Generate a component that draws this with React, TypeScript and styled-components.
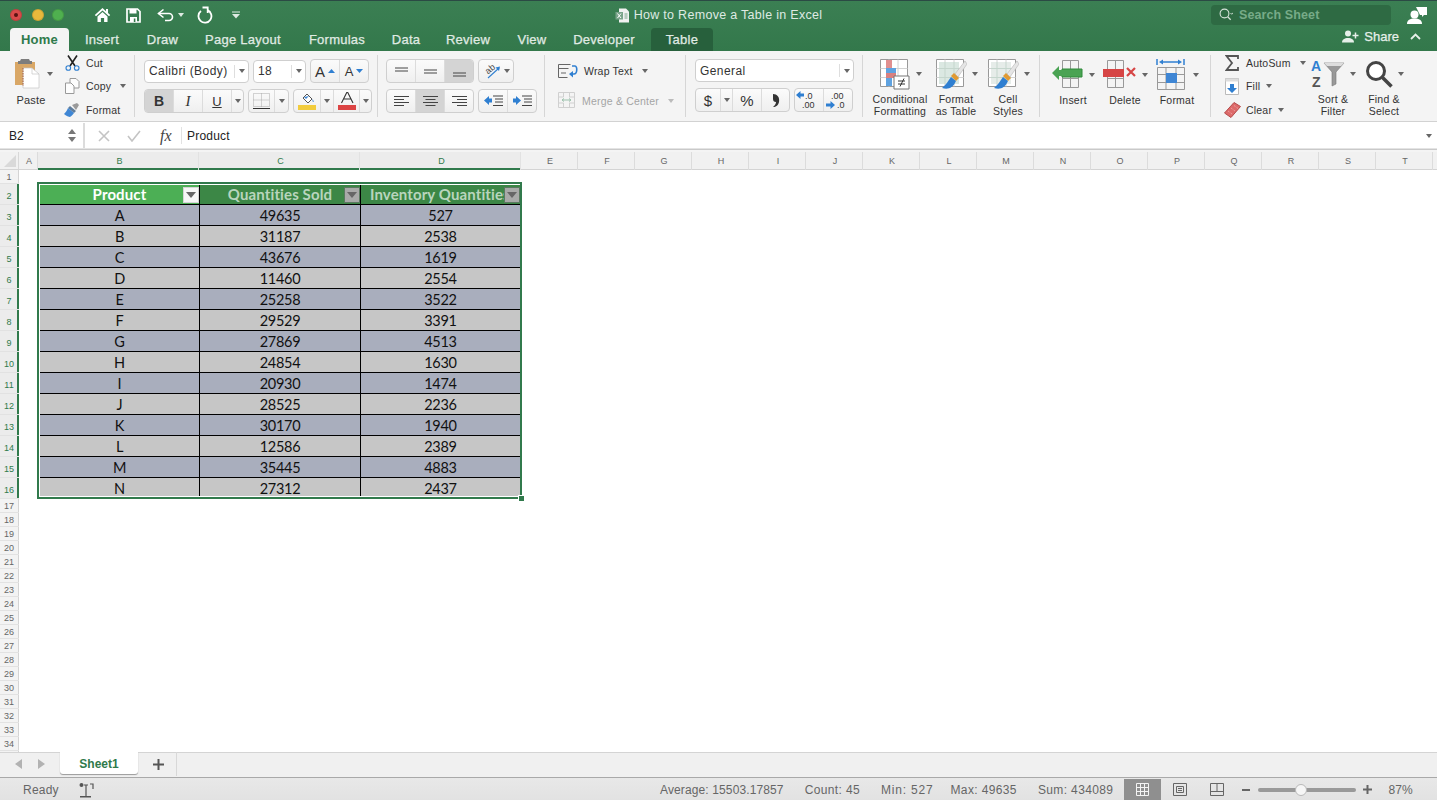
import styled, { createGlobalStyle } from "styled-components";
import { ReactNode } from "react";

const UI_FONT = `"Liberation Sans", Arial, sans-serif`;
const GREEN = "#317a4c";

const GlobalStyle = createGlobalStyle`
  html, body { margin: 0; padding: 0; background: #fff; overflow: hidden; }
  body { font-family: ${UI_FONT}; }
  * { box-sizing: border-box; }
  svg { display: block; flex: none; }
`;

const Page = styled.div`
  width: 1437px;
  height: 800px;
  display: flex;
  flex-direction: column;
  overflow: hidden;
`;

/* ---------- title bar ---------- */
const TopBar = styled.header`
  height: 51px;
  flex: none;
  background: linear-gradient(#3b7f53, #33784b);
  border-top: 1px solid #2b4a44;
  display: flex;
  flex-direction: column;
`;
const TitleRow = styled.div`
  height: 27px;
  padding-top: 1px;
  display: grid;
  grid-template-columns: 1fr auto 1fr;
  align-items: center;
`;
const QuickBar = styled.div`
  display: flex;
  align-items: center;
`;
const Light = styled.span<{ $c: string; $gap: number }>`
  width: 12px;
  height: 12px;
  border-radius: 50%;
  background: ${(p) => p.$c};
  margin-left: ${(p) => p.$gap}px;
  display: flex;
  align-items: center;
  justify-content: center;
  box-shadow: inset 0 0 0 1px rgba(0, 0, 0, 0.12);
  &::after {
    content: "";
    width: 4px;
    height: 4px;
    border-radius: 50%;
    background: ${(p) => (p.$c === "#d94a4a" ? "#5a1212" : "transparent")};
  }
`;
const QuickIcon = styled.span<{ $gap: number }>`
  margin-left: ${(p) => p.$gap}px;
  display: flex;
  align-items: center;
`;
const Title = styled.div`
  display: flex;
  align-items: center;
  gap: 4px;
  color: #dfeae3;
  font-size: 12.5px;
  letter-spacing: 0.3px;
`;
const TitleRight = styled.div`
  display: flex;
  align-items: center;
  justify-content: flex-end;
  padding-right: 10px;
`;
const SearchBox = styled.div`
  width: 180px;
  height: 20px;
  background: #2e6a43;
  border-radius: 4px;
  display: flex;
  align-items: center;
  padding-left: 8px;
  gap: 6px;
  color: #77ab88;
  font-size: 12.5px;
  font-weight: 700;
  letter-spacing: 0.1px;
`;
const TabRow = styled.nav`
  height: 23px;
  display: flex;
  align-items: flex-end;
  padding-left: 10px;
`;
const Tab = styled.div<{ $w: number; $on?: boolean; $dark?: boolean }>`
  width: ${(p) => p.$w}px;
  height: 23px;
  margin-left: ${(p) => (p.$dark ? 5 : 0)}px;
  padding-bottom: 1px;
  display: flex;
  align-items: center;
  justify-content: center;
  border-radius: 4px 4px 0 0;
  font-size: 13px;
  font-weight: ${(p) => (p.$on ? 700 : 400)};
  letter-spacing: 0.25px;
  -webkit-text-stroke: ${(p) => (p.$on ? "0" : "0.25px")};
  color: ${(p) => (p.$on ? "#2f7a4b" : "#e0ebe4")};
  background: ${(p) => (p.$on ? "#f4f4f4" : p.$dark ? "#27603c" : "transparent")};
`;
const ShareBox = styled.div`
  margin-left: auto;
  height: 23px;
  display: flex;
  align-items: center;
  color: #e6efe9;
  font-size: 13px;
  -webkit-text-stroke: 0.25px;
  gap: 5px;
  padding-right: 16px;
  position: relative;
  top: -3px;
`;

/* ---------- ribbon ---------- */
const Ribbon = styled.div`
  height: 71px;
  flex: none;
  background: #f4f4f4;
  border-bottom: 1px solid #d2d2d2;
  display: flex;
  padding: 4px 0;
  color: #333;
`;
const Group = styled.section<{ $w: number; $pad?: number; $last?: boolean }>`
  width: ${(p) => p.$w}px;
  padding-left: ${(p) => p.$pad ?? 8}px;
  border-right: ${(p) => (p.$last ? "none" : "1px solid #d6d6d6")};
  display: flex;
  align-items: stretch;
  flex: none;
`;
const Lines = styled.div<{ $gap?: number; $top?: number }>`
  display: flex;
  flex-direction: column;
  gap: ${(p) => p.$gap ?? 6}px;
  padding-top: ${(p) => p.$top ?? 4}px;
`;
const Line = styled.div`
  display: flex;
  gap: 4px;
  align-items: center;
`;
const PasteBlock = styled.div`
  width: 62px;
  margin-left: -8px;
  display: flex;
  flex-direction: column;
  align-items: center;
  font-size: 11px;
  letter-spacing: 0.2px;
  gap: 5px;
  padding: 3px 0 0 0;
`;
const PasteTop = styled.div`
  display: flex;
  align-items: center;
  gap: 7px;
  margin-left: 6px;
`;
const SmallStack = styled.div<{ $w?: number; $left?: number }>`
  width: ${(p) => p.$w ?? 70}px;
  margin: -3px 0 -3px ${(p) => p.$left ?? 0}px;
  display: flex;
  flex-direction: column;
  justify-content: space-between;
`;
const SmallRow = styled.div<{ $off?: boolean }>`
  height: 21px;
  display: flex;
  align-items: center;
  gap: 6px;
  font-size: 10.5px;
  letter-spacing: 0.2px;
  color: ${(p) => (p.$off ? "#a5a5a5" : "#333")};
`;
const SmallIcon = styled.span`
  width: 16px;
  display: flex;
  justify-content: center;
`;
const Caret = styled.span<{ $off?: boolean; $gap?: number; $light?: boolean }>`
  width: 0;
  height: 0;
  flex: none;
  margin-left: ${(p) => p.$gap ?? 0}px;
  border-left: 3px solid transparent;
  border-right: 3px solid transparent;
  border-top: 4px solid ${(p) => (p.$light ? "#dfeae3" : p.$off ? "#bbb" : "#666")};
`;
const Select = styled.div<{ $w: number }>`
  width: ${(p) => p.$w}px;
  height: 23px;
  background: #fff;
  border: 1px solid #cfcfcf;
  border-radius: 4px;
  display: flex;
  align-items: center;
  padding-left: 4px;
  font-size: 12px;
  letter-spacing: 0.42px;
  color: #333;
`;
const SelectArrow = styled.span`
  margin-left: auto;
  width: 14px;
  height: 13px;
  border-left: 1px solid #dedede;
  display: flex;
  align-items: center;
  justify-content: center;
`;
const BtnGroup = styled.div`
  height: 24px;
  display: flex;
  border: 1px solid #cfcfcf;
  border-radius: 4px;
  background: linear-gradient(#fbfbfb, #efefef);
  overflow: hidden;
`;
const Seg = styled.div<{ $w: number; $on?: boolean }>`
  width: ${(p) => p.$w}px;
  display: flex;
  align-items: center;
  justify-content: center;
  gap: 3px;
  background: ${(p) => (p.$on ? "#d4d4d4" : "transparent")};
  border-right: 1px solid #dcdcdc;
  color: #333;
  font-size: 14px;
  &:last-child { border-right: 0; }
`;
const FontGlyph = styled.span<{ $b?: boolean; $i?: boolean; $u?: boolean; $size?: number }>`
  font-weight: ${(p) => (p.$b ? 700 : 400)};
  font-style: ${(p) => (p.$i ? "italic" : "normal")};
  text-decoration: ${(p) => (p.$u ? "underline" : "none")};
  font-size: ${(p) => p.$size ?? 13}px;
  font-family: ${(p) => (p.$i ? `"Liberation Serif", serif` : UI_FONT)};
`;
const BigRow = styled.div`
  display: flex;
  height: 100%;
`;
const BigBtn = styled.div<{ $w: number }>`
  width: ${(p) => p.$w}px;
  display: flex;
  flex-direction: column;
  align-items: center;
  font-size: 10.5px;
  line-height: 12px;
  letter-spacing: 0.22px;
  text-align: center;
  color: #333;
`;
const BigIcon = styled.div`
  height: 37px;
  display: flex;
  align-items: center;
  gap: 5px;
  margin-top: 1px;
  margin-bottom: 1px;
`;
const TightLabel = styled.div`
  white-space: pre-line;
  padding-top: 1px;
`;

/* ---------- formula bar ---------- */
const FormulaBar = styled.div`
  height: 27px;
  flex: none;
  background: #fff;
  display: flex;
  align-items: center;
  padding-top: 1px;
  font-size: 12px;
  color: #222;
  border-bottom: 1px solid #e4e4e4;
`;
const NameBox = styled.div`
  width: 85px;
  height: 100%;
  display: flex;
  align-items: center;
  justify-content: space-between;
  padding: 0 7px 0 9px;
  border-right: 2px solid #dcdcdc;
`;
const Spinner = styled.div`
  display: flex;
  flex-direction: column;
  gap: 3px;
`;
const Tri = styled.span<{ $up?: boolean }>`
  width: 0;
  height: 0;
  border-left: 4px solid transparent;
  border-right: 4px solid transparent;
  ${(p) => (p.$up ? "border-bottom: 5px solid #777;" : "border-top: 5px solid #777;")}
`;
const FormulaTools = styled.div`
  width: 97px;
  height: 17px;
  display: flex;
  align-items: center;
  padding-left: 13px;
  gap: 17px;
  border-right: 1px solid #e2e2e2;
`;
const FxLabel = styled.span`
  font-family: "Liberation Serif", serif;
  font-style: italic;
  font-size: 16px;
  color: #444;
  margin-left: 2px;
`;
const FormulaText = styled.div`
  padding-left: 5px;
  flex: 1;
  letter-spacing: 0.2px;
`;
const GrayBand = styled.div`
  height: 3px;
  flex: none;
  background: #f4f4f4;
  border-top: 1px solid #c9c9c9;
`;

/* ---------- sheet ---------- */
const ColHeader = styled.div`
  height: 18px;
  flex: none;
  display: flex;
  background: #f1f1f1;
  border-bottom: 1px solid #d4d4d4;
`;
const Corner = styled.div`
  width: 19px;
  display: flex;
  align-items: flex-end;
  justify-content: flex-end;
  padding: 0 2px 2px 0;
  border-right: 1px solid #d8d8d8;
`;
const ColCell = styled.div<{ $w: number; $on?: boolean }>`
  width: ${(p) => p.$w}px;
  flex: none;
  font-size: 9px;
  padding-left: ${(p) => (p.$on ? 3 : 2)}px;
  display: flex;
  align-items: center;
  justify-content: center;
  color: ${(p) => (p.$on ? "#2f7a4b" : "#666")};
  border-right: 1px solid ${(p) => (p.$on ? "#e2e2e2" : "#dcdcdc")};
  background: ${(p) => (p.$on ? "#ececec" : "transparent")};
  box-shadow: ${(p) => (p.$on ? `inset 0 -2px 0 ${GREEN}` : "none")};
  margin-bottom: -1px;
`;
const SheetArea = styled.div`
  flex: 1;
  min-height: 0;
  display: flex;
`;
const RowHeader = styled.div`
  width: 19px;
  flex: none;
  background: #f3f3f3;
  border-right: 1px solid #d4d4d4;
`;
const RowCell = styled.div<{ $h: number; $on?: boolean }>`
  height: ${(p) => p.$h}px;
  font-size: 9px;
  display: flex;
  align-items: center;
  justify-content: center;
  color: ${(p) => (p.$on ? "#2f7a4b" : "#666")};
  padding: ${(p) => (p.$on ? "3px" : "1px")} 1px 0 0;
  background: ${(p) => (p.$on ? "#ececec" : "transparent")};
  border-bottom: 1px solid #e2e2e2;
  box-shadow: ${(p) => (p.$on ? `inset -2px 0 0 ${GREEN}` : "none")};
  margin-right: -1px;
`;
const Canvas = styled.div`
  flex: 1;
  padding: 12px 0 0 18px;
`;
const TableFrame = styled.div`
  width: 485px;
  height: 317px;
  border: 2px solid ${GREEN};
  background: #fff;
  padding: 1px 0 1px 1px;
  position: relative;
  font-family: Lato, "Open Sans", sans-serif;
`;
const Handle = styled.span`
  position: absolute;
  right: -4px;
  bottom: -4px;
  width: 6px;
  height: 6px;
  background: ${GREEN};
  border-left: 1px solid #fff;
  border-top: 1px solid #fff;
`;
const TableGrid = styled.div`
  display: grid;
  grid-template-columns: 160px 161px 159px;
  grid-template-rows: 20px repeat(13, 21px) 18px;
`;
const HeadCell = styled.div<{ $dim?: boolean; $left?: boolean }>`
  position: relative;
  display: flex;
  align-items: center;
  justify-content: ${(p) => (p.$left ? "flex-start" : "center")};
  padding-left: ${(p) => (p.$left ? 9 : 0)}px;
  padding-bottom: 1px;
  overflow: hidden;
  white-space: nowrap;
  background: ${(p) => (p.$dim ? "#3c8746" : "#4caf55")};
  color: ${(p) => (p.$dim ? "#b9d5bd" : "#fff")};
  font-weight: 700;
  font-size: 15px;
  letter-spacing: 0.12px;
  border-bottom: 1px solid #000;
  border-right: ${(p) => (p.$left ? "0" : "1px solid #000")};
`;
const FilterBtn = styled.span<{ $dim?: boolean }>`
  position: absolute;
  right: 0;
  top: 2px;
  width: 16px;
  height: 16px;
  background: ${(p) => (p.$dim ? "#a9aaa9" : "#f6f6f6")};
  border: 1px solid ${(p) => (p.$dim ? "#5b7a60" : "#d5d5d5")};
  display: flex;
  align-items: center;
  justify-content: center;
  &::after {
    content: "";
    border-left: 5px solid transparent;
    border-right: 5px solid transparent;
    border-top: 6px solid #666;
  }
`;
const Cell = styled.div<{ $odd: boolean; $last?: boolean; $end?: boolean }>`
  display: flex;
  align-items: center;
  justify-content: center;
  font-size: 14.5px;
  letter-spacing: -0.28px;
  padding-top: ${(p) => (p.$end ? 3 : 0)}px;
  color: #111;
  background: ${(p) => (p.$odd ? "#a9aebd" : "#c6c6c6")};
  border-bottom: ${(p) => (p.$end ? "0" : "1px solid #000")};
  border-right: ${(p) => (p.$last ? "0" : "1px solid #000")};
  overflow: hidden;
`;

/* ---------- tabs and status ---------- */
const SheetTabs = styled.div`
  height: 26px;
  flex: none;
  display: flex;
  align-items: flex-start;
  background: #f0f0f0;
  border-top: 1px solid #d4d4d4;
  border-bottom: 1px solid #a9a9a9;
`;
const NavArrows = styled.div`
  width: 60px;
  height: 22px;
  display: flex;
  align-items: center;
  justify-content: center;
  gap: 16px;
  padding-right: 1px;
`;
const NavTri = styled.span<{ $right?: boolean }>`
  width: 0;
  height: 0;
  border-top: 5px solid transparent;
  border-bottom: 5px solid transparent;
  ${(p) => (p.$right ? "border-left: 7px solid #b2b2b2;" : "border-right: 7px solid #b2b2b2;")}
`;
const SheetTab = styled.div`
  width: 78px;
  height: 22px;
  padding-top: 2px;
  background: #fff;
  border-radius: 0 0 3px 3px;
  box-shadow: 0 1px 1px #999;
  display: flex;
  align-items: center;
  justify-content: center;
  color: #2f7a4b;
  font-weight: 700;
  font-size: 12px;
  margin-top: -1px;
`;
const AddSheet = styled.div`
  width: 39px;
  height: 24px;
  margin-top: -1px;
  padding-left: 2px;
  display: flex;
  align-items: center;
  justify-content: center;
  border-right: 1px solid #d8d8d8;
`;
const StatusBar = styled.footer`
  height: 22px;
  flex: none;
  display: flex;
  align-items: center;
  padding-top: 1px;
  background: linear-gradient(#e8e8e8, #e2e2e2);
  font-size: 12px;
  color: #666;
  letter-spacing: 0.37px;
`;
const Ready = styled.span`
  margin-left: 23px;
  margin-right: 20px;
  letter-spacing: 0.22px;
`;
const Stats = styled.div`
  margin-left: auto;
  display: flex;
  margin-right: 11px;
`;
const Stat = styled.span<{ $gap?: number; $ls?: number }>`
  margin-left: ${(p) => p.$gap ?? 21}px;
  letter-spacing: ${(p) => p.$ls ?? 0.37}px;
`;
const ViewBtn = styled.div<{ $on?: boolean }>`
  width: 37px;
  height: 21px;
  display: flex;
  align-items: center;
  justify-content: center;
  background: ${(p) => (p.$on ? "#8f8f8f" : "transparent")};
`;
const Zoomer = styled.div`
  display: flex;
  align-items: center;
  margin-left: 7px;
`;
const Track = styled.div`
  width: 98px;
  height: 4px;
  border-radius: 2px;
  background: #999;
  margin: 0 7px 0 8px;
  position: relative;
`;
const Knob = styled.span`
  position: absolute;
  left: 37px;
  top: -4px;
  width: 12px;
  height: 12px;
  border-radius: 50%;
  background: #f6f6f6;
  border: 1px solid #b9b9b9;
`;
const Percent = styled.span`
  margin-left: 16px;
  margin-right: 24px;
  letter-spacing: 0.2px;
`;

/* ---------- drawings ---------- */
const Svg = ({ w, h, children }: { w: number; h: number; children: ReactNode }) => (
  <svg width={w} height={h} viewBox={`0 0 ${w} ${h}`} fill="none">
    {children}
  </svg>
);

const HomeIcon = () => (
  <Svg w={17} h={16}>
    <path d="M8.5 1 .8 8l1.2 1.2L8.5 3.4 15 9.2 16.2 8l-2.2-2V2h-2v2.2z" fill="#fff" />
    <path d="M3.5 9.5 8.5 5l5 4.5V15h-3.4v-4H6.9v4H3.5z" fill="#fff" />
  </Svg>
);
const SaveIcon = () => (
  <Svg w={15} h={15}>
    <path d="M1 1h10.5L14 3.5V14H1z" stroke="#fff" strokeWidth="1.7" />
    <path d="M3.5 1h7v4.5h-7z" fill="#fff" />
    <path d="M4 9h7v5H4z" fill="#fff" />
    <path d="M7.8 10.5h1.6V14H7.8z" fill="#33784b" />
  </Svg>
);
const UndoIcon = () => (
  <Svg w={18} h={14}>
    <path d="M6.5 1.5 1.500 5.500l5 4" stroke="#fff" strokeWidth="1.6" />
    <path d="M1.500 5.500H12a3.500 3.500 0 0 1 0 7H8" stroke="#fff" strokeWidth="1.6" />
  </Svg>
);
const RedoIcon = () => (
  <Svg w={16} h={18}>
    <path d="M10.500 4.200A6.500 6.500 0 1 1 4 5" stroke="#fff" strokeWidth="1.800" />
    <path d="M5.500 1.500h5.200v5.600" stroke="#fff" strokeWidth="1.800" />
  </Svg>
);
const QuickMore = () => (
  <Svg w={8} h={8}>
    <path d="M0 1h8" stroke="#dfeae3" strokeWidth="1" />
    <path d="M0 3h8L4 7.5z" fill="#dfeae3" />
  </Svg>
);
const ExcelDoc = () => (
  <Svg w={15} h={15}>
    <path d="M4 .5h7L14 3.5V14.5H4z" fill="#f1f1f1" />
    <path d="M.5 4H8v7.5H.5z" fill="#7aa48a" />
    <path d="m2.5 5.5 3.5 4.5M6 5.5 2.5 10" stroke="#fff" />
    <path d="M9.5 6h3M9.5 8h3M9.5 10h3" stroke="#7aa48a" />
  </Svg>
);
const SearchIcon = ({ c = "#d5e2d9", w = 14 }: { c?: string; w?: number }) => (
  <Svg w={w} h={14}>
    <circle cx="5.5" cy="5.5" r="4.4" stroke={c} strokeWidth="1.1" />
    <path d="m8.7 8.7 3 3" stroke={c} strokeWidth="1.3" />
    <path d="m11.5 5 1.2 1.2L13.9 5" stroke={c} />
  </Svg>
);
const PersonChat = () => (
  <Svg w={20} h={19}>
    <path d="M9 1h11v8h-3l-2 2V9h-2z" fill="#fff" />
    <circle cx="7.5" cy="8.5" r="4" fill="#fff" />
    <path d="M0 18c0-4 3-5.5 7.5-5.5S15 14 15 18z" fill="#fff" />
  </Svg>
);
const PersonPlus = () => (
  <Svg w={17} h={13}>
    <circle cx="6" cy="3.5" r="3" fill="#e6efe9" />
    <path d="M0 12.5c0-3 2.5-4.5 6-4.5s6 1.500 6 4.500z" fill="#e6efe9" />
    <path d="M13.500 2.500v6M10.500 5.500h6" stroke="#e6efe9" strokeWidth="1.500" />
  </Svg>
);
const Chevron = () => (
  <Svg w={11} h={7}>
    <path d="m1 6 4.500-4.500L10 6" stroke="#e6efe9" strokeWidth="1.800" />
  </Svg>
);
const PasteIcon = () => (
  <Svg w={25} h={31}>
    <path d="M0 4h20v23H0z" fill="#d9a766" />
    <path d="M6 1h8l1 2h2v3H3V3h2z" fill="#7d7d7d" />
    <path d="M8 10h9l7 6v14H8z" fill="#fff" stroke="#c6c6c6" strokeWidth=".7" />
    <path d="M17 10v6h7" stroke="#c6c6c6" strokeWidth=".7" />
    <path d="M8 10v18" stroke="#a8562e" strokeWidth="1" strokeDasharray="1.500 1" />
  </Svg>
);
const CutIcon = () => (
  <Svg w={15} h={16}>
    <path d="M3 .5 10 11M12 .5 5 11" stroke="#222" strokeWidth="1.600" />
    <circle cx="3.300" cy="13" r="2.300" stroke="#2f7fd1" strokeWidth="1.100" />
    <circle cx="11.700" cy="13" r="2.300" stroke="#2f7fd1" strokeWidth="1.100" />
  </Svg>
);
const CopyIcon = () => (
  <Svg w={15} h={16}>
    <path d="M5 .5h6l3 3V10H5z" fill="#fdfdfd" stroke="#999" />
    <path d="M.5 5H6l3 3v7.500H.500z" fill="#fdfdfd" stroke="#999" />
  </Svg>
);
const BrushIcon = () => (
  <Svg w={16} h={14}>
    <path d="m8 2 5-2 2 2-3 5z" fill="#9a9a9a" />
    <path d="m6 3 6 5-2 2-6-5z" fill="#5f7c9a" />
    <path d="M4 5c-1 3-3 5-4 6 2 2 5 3 6 3 2-1 3-3 4-4z" fill="#3f86d4" />
  </Svg>
);
const GrowA = ({ up }: { up: boolean }) => (
  <>
    <FontGlyph $size={up ? 15 : 13}>A</FontGlyph>
    <svg width="7" height="4" viewBox="0 0 7 4">
      <path d={up ? "M0 4 3.500 0 7 4z" : "M0 0h7L3.500 4z"} fill="#2f7fd1" />
    </svg>
  </>
);
const BorderIcon = () => (
  <Svg w={17} h={17}>
    <path d="M.5.5h16v13H.5zM8.500.5v13M.5 7h16" stroke="#aaa" strokeDasharray="1 1" />
    <path d="M0 15.500h17" stroke="#333" strokeWidth="1" />
  </Svg>
);
const FillIcon = () => (
  <Svg w={18} h={18}>
    <path d="m9 2 5 5-4 4-5-5z" fill="#fff" stroke="#555" />
    <path d="M6 5 8 7l3-3z" fill="#3f86d4" />
    <path d="M14.500 7c1 1.500 1.500 2.500 1 3-.8.3-1.200-.8-1-3z" fill="#3f86d4" />
    <path d="M0 13h18v5H0z" fill="#f2cc3d" />
  </Svg>
);
const ColorA = () => (
  <Svg w={18} h={18}>
    <path d="M0 13h18v5H0z" fill="#dc4444" />
    <path d="M3.500 11 9 0h.5L15 11M6 7h7" stroke="#333" strokeWidth="1.100" />
  </Svg>
);
const VAlign = ({ y }: { y: number }) => (
  <Svg w={13} h={13}>
    <path d={`M0 ${y}h13M0 ${y + 3}h13`} stroke="#444" />
  </Svg>
);
const HAlign = ({ kind }: { kind: "l" | "c" | "r" }) => {
  const s = (long: boolean, y: number) => {
    const w = long ? 15 : 10;
    const x = kind === "l" ? 0 : kind === "r" ? 15 - w : (15 - w) / 2;
    return `M${x} ${y}h${w}`;
  };
  return (
    <Svg w={15} h={12}>
      <path d={[s(true, 1.5), s(false, 4.5), s(true, 7.5), s(false, 10.5)].join("")} stroke="#444" />
    </Svg>
  );
};
const OrientIcon = () => (
  <svg width="18" height="18" viewBox="0 0 18 18" fill="none" overflow="visible">
    <text x="2" y="10" fontSize="9" fill="#444" transform="rotate(-40 7 7)" fontFamily={UI_FONT}>ab</text>
    <path d="M5 16 16 6" stroke="#2f7fd1" strokeWidth="1.100" />
    <path d="m12.500 5.500 4.500-1-1 4.500z" fill="#2f7fd1" />
  </svg>
);
const IndentIcon = ({ dir }: { dir: "out" | "in" }) => (
  <Svg w={19} h={12}>
    <path d="M9 1h10M11 4h8M11 7h8M9 10.500h10" stroke="#444" />
    <path d={dir === "out" ? "M0 5.500 5 1v2.500h3v4H5V10z" : "M8 5.500 3 1v2.500H0v4h3V10z"} fill="#2f7fd1" />
  </Svg>
);
const WrapIcon = () => (
  <Svg w={20} h={16}>
    <path d="M.5 1.500h12M.5 14.500h9M.5 1.500v13M.5 5.500h10M3 10h5" stroke="#666" />
    <path d="M14 3h3c2.500 0 2.500 8-1 8h-3" stroke="#2f7fd1" strokeWidth="1.600" />
    <path d="m15 8-4 3 4 3.500z" fill="#2f7fd1" />
  </Svg>
);
const MergeIcon = () => (
  <Svg w={18} h={17}>
    <path d="M.5.500h16v15H.500zM.5 5h5M11 5h5.500M.5 11h5M11 11h5.500M5.500.500V5M11.500.500V5M5.500 11v4.500M11.500 11v4.500" stroke="#d0d0d0" />
    <path d="M4 8h9M4 8l2-1.500M4 8l2 1.500M13 8l-2-1.500M13 8l-2 1.500" stroke="#9dc2ad" />
  </Svg>
);
const DecIcon = ({ more }: { more: boolean }) => (
  <Svg w={26} h={20}>
    <text x={more ? 9 : 6} y="9" fontSize="9" fontFamily={UI_FONT} fill="#333">{more ? ".0" : ".00"}</text>
    <text x={more ? 6 : 12} y="18" fontSize="9" fontFamily={UI_FONT} fill="#333">{more ? ".00" : ".0"}</text>
    <path d={more ? "M0 5 4.500 1v2.500H8v3H4.500V9z" : "M10 15l-4.500-4v2.500H1v3h4.500V19z"} fill="#2f7fd1" />
  </Svg>
);
const CommaIcon = () => (
  <Svg w={8} h={13}>
    <path d="M1 0c4 0 7 3 6 8-.5 3-3 5-6 5 2-2 3-3 3-5-2 0-3-1-3-3 0-3 0-3 0-5z" fill="#333" />
  </Svg>
);
const MiniGrid = ({ children }: { children?: ReactNode }) => (
  <Svg w={32} h={32}>
    <path d="M1.500 1.500h27v27h-27z" fill="#fff" stroke="#999" />
    <path d="M10 1.500v27M19 1.500v27M1.500 10.500h27M1.500 19.500h27" stroke="#d2d2d2" />
    {children}
  </Svg>
);
const CondIcon = () => (
  <MiniGrid>
    <path d="M7 2h6v8H7z" fill="#e08f8f" />
    <path d="M7 10h10v8H7z" fill="#5fa2e0" />
    <path d="M7 15h10v5H7z" fill="#d98080" />
    <path d="M7 20h6v8H7z" fill="#5fa2e0" />
    <path d="M15 18h15v13H15z" fill="#fff" stroke="#777" />
    <path d="M19 23h7M19 26h7M25 20.500l-4 8" stroke="#333" />
  </MiniGrid>
);
const TableBrush = ({ tint }: { tint: string }) => (
  <MiniGrid>
    <path d="M4 4h20v22H4z" fill={tint} />
    <path d="M4 10.500h20M4 19.500h20M10 4v22M19 4v22" stroke="#c5d6cd" />
    <path d="m30 3-10 13 3 3L32 6z" fill="#e5e5e5" stroke="#aaa" strokeWidth=".5" />
    <path d="m19 15 5 5-3 3-5-5z" fill="#e09a33" />
    <path d="M16 19c-3 4-5 8-9 11 6 2 11 0 14-7z" fill="#2f7fd1" />
  </MiniGrid>
);
const InsertIcon = () => (
  <Svg w={32} h={32}>
    <path d="M10.500 1.500h16v27h-16zM18.500 1.500v27M10.500 19.500h16" stroke="#999" />
    <path d="M10 10h20v8H10z" fill="#4aa353" stroke="#2f8a3b" />
    <path d="M0 14 7 7v4h4v6H7v4z" fill="#4aa353" />
  </Svg>
);
const DeleteIcon = () => (
  <Svg w={34} h={32}>
    <path d="M4.500 1.500h16v27h-16zM12.500 1.500v27M4.500 19.500h16" stroke="#999" />
    <path d="M0 10h21v8H0z" fill="#d64545" />
    <path d="m24 9 8 8M32 9l-8 8" stroke="#d64545" strokeWidth="2.200" />
  </Svg>
);
const FormatIcon = () => (
  <Svg w={32} h={32}>
    <path d="M1.500 8.500h27v22h-27zM1.500 15.500h27M1.500 23.500h27M10 8.500v22M20 8.500v22" stroke="#999" />
    <path d="M10 14h11v10H10z" fill="#3f86d4" />
    <path d="M1 0v6M28 0v6M5 3h19" stroke="#2f7fd1" strokeWidth="1.500" />
    <path d="m3 3 4-2.500v5zM26 3l-4-2.500v5z" fill="#2f7fd1" />
  </Svg>
);
const SigmaIcon = () => (
  <Svg w={14} h={16}>
    <path d="M13 4V1H1.500L7 8 1.500 15H13v-3" stroke="#555" strokeWidth="1.800" />
  </Svg>
);
const FillDownIcon = () => (
  <Svg w={14} h={17}>
    <path d="M.5.500h13v16H.500z" fill="#fff" stroke="#bbb" />
    <path d="M.5.500h13v3H.500z" fill="#ddd" />
    <path d="M5 6h4v4h3l-5 5-5-5h3z" fill="#2f7fd1" />
  </Svg>
);
const EraserIcon = () => (
  <Svg w={17} h={16}>
    <path d="m10 .5 6.500 4L7 15.500.5 11z" fill="#dd6a6a" stroke="#b54b4b" />
    <path d="M4 9l4 3M7 6l4 3M10 3.500l4 3" stroke="#eeaaaa" strokeDasharray="1 1" />
  </Svg>
);
const SortIcon = () => (
  <Svg w={34} h={32}>
    <text x="0" y="13" fontSize="14" fontWeight="700" fill="#2f7fd1" fontFamily={UI_FONT}>A</text>
    <text x="1" y="29" fontSize="14" fontWeight="700" fill="#555" fontFamily={UI_FONT}>Z</text>
    <path d="M13 5h20l-8 9v12l-4 2V14z" fill="#999" stroke="#777" strokeWidth=".6" />
    <path d="M13 5h20l-3 3H16z" fill="#ddd" />
  </Svg>
);
const FindIcon = () => (
  <Svg w={28} h={28}>
    <circle cx="11" cy="11" r="8.500" stroke="#444" strokeWidth="3" fill="#fff" />
    <path d="m17.500 17.500 9 9" stroke="#444" strokeWidth="3.600" />
  </Svg>
);
const CrossIcon = () => (
  <Svg w={12} h={12}>
    <path d="m1 1 10 10M11 1 1 11" stroke="#c4c4c4" strokeWidth="1.600" />
  </Svg>
);
const CheckIcon = () => (
  <Svg w={14} h={12}>
    <path d="m1 6 4 5 8-10" stroke="#c4c4c4" strokeWidth="1.600" />
  </Svg>
);
const MacroIcon = () => (
  <Svg w={16} h={16}>
    <circle cx="2.500" cy="3" r="2" fill="#555" />
    <path d="M5 3h4M7 3v11M11 2h3v5" stroke="#555" strokeWidth="1.200" />
    <path d="M1 14h11v1.500H1z" fill="#555" />
  </Svg>
);
const PlusIcon = ({ s = 11, c = "#555" }: { s?: number; c?: string }) => (
  <Svg w={s} h={s}>
    <path d={`M${s / 2} 0v${s}M0 ${s / 2}h${s}`} stroke={c} strokeWidth="2" />
  </Svg>
);
const GridView = () => (
  <Svg w={13} h={13}>
    <path d="M.5.500h12v12H.500zM4.500.500v12M8.500.500v12M.5 4.500h12M.5 8.500h12" stroke="#f3f3f3" />
  </Svg>
);
const PageView = () => (
  <Svg w={14} h={13}>
    <path d="M.5.500h13v12H.500z" stroke="#666" />
    <path d="M3.500 3.500h7v6h-7zM5 5.500h4M5 7.500h4" stroke="#666" />
  </Svg>
);
const BreakView = () => (
  <Svg w={14} h={13}>
    <path d="M.5.500h13v12H.500zM.5 8.500h13M7 .500v8" stroke="#666" />
  </Svg>
);

/* ---------- data ---------- */
const tabs = [
  { t: "Insert", w: 66 },
  { t: "Draw", w: 55 },
  { t: "Page Layout", w: 106 },
  { t: "Formulas", w: 82 },
  { t: "Data", w: 56 },
  { t: "Review", w: 68 },
  { t: "View", w: 60 },
  { t: "Developer", w: 84 },
];
const rows: [string, number, number][] = [
  ["A", 49635, 527],
  ["B", 31187, 2538],
  ["C", 43676, 1619],
  ["D", 11460, 2554],
  ["E", 25258, 3522],
  ["F", 29529, 3391],
  ["G", 27869, 4513],
  ["H", 24854, 1630],
  ["I", 20930, 1474],
  ["J", 28525, 2236],
  ["K", 30170, 1940],
  ["L", 12586, 2389],
  ["M", 35445, 4883],
  ["N", 27312, 2437],
];
const plainCols = "EFGHIJKLMNOPQRST".split("");
const rowNumbers = Array.from({ length: 34 }, (_, i) => i + 1);

export default function App() {
  return (
    <Page>
      <GlobalStyle />
      <TopBar>
        <TitleRow>
          <QuickBar>
            <Light $c="#d94a4a" $gap={10} />
            <Light $c="#e8b93c" $gap={10} />
            <Light $c="#4fb04f" $gap={8} />
            <QuickIcon $gap={30}><HomeIcon /></QuickIcon>
            <QuickIcon $gap={15}><SaveIcon /></QuickIcon>
            <QuickIcon $gap={16}><UndoIcon /></QuickIcon>
            <QuickIcon $gap={3}><Caret $light /></QuickIcon>
            <QuickIcon $gap={13}><RedoIcon /></QuickIcon>
            <QuickIcon $gap={19}><QuickMore /></QuickIcon>
          </QuickBar>
          <Title>
            <ExcelDoc />
            How to Remove a Table in Excel
          </Title>
          <TitleRight>
            <SearchBox>
              <SearchIcon />
              Search Sheet
            </SearchBox>
            <QuickIcon $gap={16}><PersonChat /></QuickIcon>
          </TitleRight>
        </TitleRow>
        <TabRow>
          <Tab $w={59} $on>Home</Tab>
          {tabs.map((t) => (
            <Tab key={t.t} $w={t.w}>{t.t}</Tab>
          ))}
          <Tab $w={62} $dark>Table</Tab>
          <ShareBox>
            <PersonPlus />
            Share
            <QuickIcon $gap={6}><Chevron /></QuickIcon>
          </ShareBox>
        </TabRow>
      </TopBar>

      <Ribbon>
        <Group $w={135} $pad={8}>
          <PasteBlock>
            <PasteTop>
              <PasteIcon />
              <Caret />
            </PasteTop>
            Paste
          </PasteBlock>
          <SmallStack $left={2}>
            <SmallRow><SmallIcon><CutIcon /></SmallIcon>Cut</SmallRow>
            <SmallRow><SmallIcon><CopyIcon /></SmallIcon>Copy<Caret $gap={3} /></SmallRow>
            <SmallRow><SmallIcon><BrushIcon /></SmallIcon>Format</SmallRow>
          </SmallStack>
        </Group>

        <Group $w={243} $pad={9}>
          <Lines>
            <Line>
              <Select $w={105}>Calibri (Body)<SelectArrow><Caret /></SelectArrow></Select>
              <Select $w={53}>18<SelectArrow><Caret /></SelectArrow></Select>
              <BtnGroup>
                <Seg $w={29}><GrowA up /></Seg>
                <Seg $w={28}><GrowA up={false} /></Seg>
              </BtnGroup>
            </Line>
            <Line>
              <BtnGroup>
                <Seg $w={29} $on><FontGlyph $b $size={14}>B</FontGlyph></Seg>
                <Seg $w={29}><FontGlyph $i $size={15}>I</FontGlyph></Seg>
                <Seg $w={29}><FontGlyph $u $size={13}>U</FontGlyph></Seg>
                <Seg $w={11}><Caret /></Seg>
              </BtnGroup>
              <BtnGroup>
                <Seg $w={26}><BorderIcon /></Seg>
                <Seg $w={13}><Caret /></Seg>
              </BtnGroup>
              <BtnGroup>
                <Seg $w={27}><FillIcon /></Seg>
                <Seg $w={13}><Caret /></Seg>
                <Seg $w={26}><ColorA /></Seg>
                <Seg $w={11}><Caret /></Seg>
              </BtnGroup>
            </Line>
          </Lines>
        </Group>

        <Group $w={167} $pad={8}>
          <Lines>
            <Line>
              <BtnGroup>
                <Seg $w={29}><VAlign y={3} /></Seg>
                <Seg $w={29}><VAlign y={5} /></Seg>
                <Seg $w={28} $on><VAlign y={8} /></Seg>
              </BtnGroup>
              <BtnGroup>
                <Seg $w={34}><OrientIcon /><Caret /></Seg>
              </BtnGroup>
            </Line>
            <Line>
              <BtnGroup>
                <Seg $w={29}><HAlign kind="l" /></Seg>
                <Seg $w={29} $on><HAlign kind="c" /></Seg>
                <Seg $w={28}><HAlign kind="r" /></Seg>
              </BtnGroup>
              <BtnGroup>
                <Seg $w={29}><IndentIcon dir="out" /></Seg>
                <Seg $w={28}><IndentIcon dir="in" /></Seg>
              </BtnGroup>
            </Line>
          </Lines>
        </Group>

        <Group $w={141} $pad={13}>
          <Lines $gap={9} $top={5}>
            <SmallRow><WrapIcon />Wrap Text<Caret $gap={3} /></SmallRow>
            <SmallRow $off><MergeIcon />Merge &amp; Center<Caret $off $gap={3} /></SmallRow>
          </Lines>
        </Group>

        <Group $w={177} $pad={9}>
          <Lines>
            <Line>
              <Select $w={159}>General<SelectArrow><Caret /></SelectArrow></Select>
            </Line>
            <Line>
              <BtnGroup>
                <Seg $w={25}><FontGlyph $size={15}>$</FontGlyph></Seg>
                <Seg $w={12}><Caret /></Seg>
                <Seg $w={29}><FontGlyph $size={15}>%</FontGlyph></Seg>
                <Seg $w={27}><CommaIcon /></Seg>
              </BtnGroup>
              <BtnGroup>
                <Seg $w={29}><DecIcon more /></Seg>
                <Seg $w={28}><DecIcon more={false} /></Seg>
              </BtnGroup>
            </Line>
          </Lines>
        </Group>

        <Group $w={177} $pad={8}>
          <BigRow>
            <BigBtn $w={58}>
              <BigIcon><CondIcon /><Caret /></BigIcon>
              <TightLabel>{"Conditional\nFormatting"}</TightLabel>
            </BigBtn>
            <BigBtn $w={54}>
              <BigIcon><TableBrush tint="#dbe8e2" /><Caret /></BigIcon>
              <TightLabel>{"Format\nas Table"}</TightLabel>
            </BigBtn>
            <BigBtn $w={50}>
              <BigIcon><TableBrush tint="#e6ece9" /><Caret /></BigIcon>
              <TightLabel>{"Cell\nStyles"}</TightLabel>
            </BigBtn>
          </BigRow>
        </Group>

        <Group $w={171} $pad={7}>
          <BigRow>
            <BigBtn $w={52}>
              <BigIcon><InsertIcon /><Caret /></BigIcon>
              Insert
            </BigBtn>
            <BigBtn $w={52}>
              <BigIcon><DeleteIcon /><Caret /></BigIcon>
              Delete
            </BigBtn>
            <BigBtn $w={52}>
              <BigIcon><FormatIcon /><Caret /></BigIcon>
              Format
            </BigBtn>
          </BigRow>
        </Group>

        <Group $w={226} $pad={13} $last>
          <SmallStack $w={88}>
            <SmallRow><SmallIcon><SigmaIcon /></SmallIcon>AutoSum<Caret $gap={3} /></SmallRow>
            <SmallRow><SmallIcon><FillDownIcon /></SmallIcon>Fill<Caret /></SmallRow>
            <SmallRow><SmallIcon><EraserIcon /></SmallIcon>Clear<Caret /></SmallRow>
          </SmallStack>
          <BigRow>
            <BigBtn $w={42}>
              <BigIcon><SortIcon /><Caret /></BigIcon>
              <TightLabel>{"Sort &\nFilter"}</TightLabel>
            </BigBtn>
            <BigBtn $w={60}>
              <BigIcon><FindIcon /><Caret /></BigIcon>
              <TightLabel>{"Find &\nSelect"}</TightLabel>
            </BigBtn>
          </BigRow>
        </Group>
      </Ribbon>

      <FormulaBar>
        <NameBox>
          B2
          <Spinner><Tri $up /><Tri /></Spinner>
        </NameBox>
        <FormulaTools>
          <CrossIcon />
          <CheckIcon />
          <FxLabel>fx</FxLabel>
        </FormulaTools>
        <FormulaText>Product</FormulaText>
        <QuickIcon $gap={0}><Caret /></QuickIcon>
        <QuickIcon $gap={5} />
      </FormulaBar>
      <GrayBand />

      <ColHeader>
        <Corner>
          <svg width="12" height="12" viewBox="0 0 12 12"><path d="M12 0v12H0z" fill="#d9d9d9" /></svg>
        </Corner>
        <ColCell $w={19}>A</ColCell>
        <ColCell $w={161} $on>B</ColCell>
        <ColCell $w={161} $on>C</ColCell>
        <ColCell $w={161} $on>D</ColCell>
        {plainCols.map((c) => (
          <ColCell key={c} $w={57}>{c}</ColCell>
        ))}
      </ColHeader>

      <SheetArea>
        <RowHeader>
          {rowNumbers.map((n) => (
            <RowCell key={n} $h={n >= 2 && n <= 16 ? 21 : 14} $on={n >= 2 && n <= 16}>{n}</RowCell>
          ))}
        </RowHeader>
        <Canvas>
          <TableFrame>
            <TableGrid>
              <HeadCell>Product<FilterBtn /></HeadCell>
              <HeadCell $dim>Quantities Sold<FilterBtn $dim /></HeadCell>
              <HeadCell $dim $left>Inventory Quantities<FilterBtn $dim /></HeadCell>
              {rows.map(([name, sold, stock], i) => (
                <Row key={name} name={name} sold={sold} stock={stock} odd={i % 2 === 0} end={i === rows.length - 1} />
              ))}
            </TableGrid>
            <Handle />
          </TableFrame>
        </Canvas>
      </SheetArea>

      <SheetTabs>
        <NavArrows>
          <NavTri />
          <NavTri $right />
        </NavArrows>
        <SheetTab>Sheet1</SheetTab>
        <AddSheet><PlusIcon /></AddSheet>
      </SheetTabs>

      <StatusBar>
        <Ready>Ready</Ready>
        <MacroIcon />
        <Stats>
          <Stat $gap={0} $ls={0.12}>Average: 15503.17857</Stat>
          <Stat>Count: 45</Stat>
          <Stat $ls={0.8}>Min: 527</Stat>
          <Stat $gap={17}>Max: 49635</Stat>
          <Stat>Sum: 434089</Stat>
        </Stats>
        <ViewBtn $on><GridView /></ViewBtn>
        <ViewBtn><PageView /></ViewBtn>
        <ViewBtn><BreakView /></ViewBtn>
        <Zoomer>
          <svg width="8" height="2" viewBox="0 0 8 2"><path d="M0 0h8v2H0z" fill="#666" /></svg>
          <Track><Knob /></Track>
          <PlusIcon s={9} c="#666" />
        </Zoomer>
        <Percent>87%</Percent>
      </StatusBar>
    </Page>
  );
}

function Row({ name, sold, stock, odd, end }: { name: string; sold: number; stock: number; odd: boolean; end: boolean }) {
  return (
    <>
      <Cell $odd={odd} $end={end}>{name}</Cell>
      <Cell $odd={odd} $end={end}>{sold}</Cell>
      <Cell $odd={odd} $end={end} $last>{stock}</Cell>
    </>
  );
}
